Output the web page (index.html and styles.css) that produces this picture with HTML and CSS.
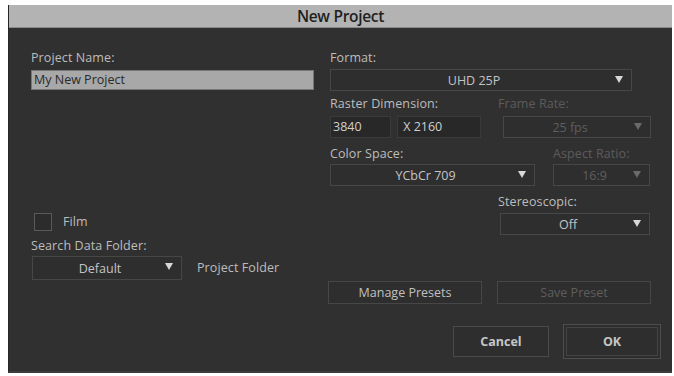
FILE: index.html
```html
<!DOCTYPE html>
<html>
<head>
<meta charset="utf-8">
<link rel="stylesheet" href="styles.css">
</head>
<body>
<div class="dialog">
  <div class="titlebar">New Project</div>
  <div class="content">
    <div class="col-left">
      <div class="label first">Project Name:</div>
      <div class="textfield">My New Project</div>
      <div class="film-row">
        <span class="checkbox"></span>
        <span class="label">Film</span>
      </div>
      <div class="label search-label">Search Data Folder:</div>
      <div class="folder-row">
        <div class="select select-default"><span class="val">Default</span><span class="arrow"></span></div>
        <span class="label">Project Folder</span>
      </div>
    </div>
    <div class="col-right">
      <div class="label first">Format:</div>
      <div class="select select-format"><span class="val">UHD 25P</span><span class="arrow"></span></div>
      <div class="row label-row">
        <span class="label w-raster">Raster Dimension:</span>
        <span class="label dim">Frame Rate:</span>
      </div>
      <div class="row field-row">
        <div class="numfield w-w">3840</div>
        <div class="numfield w-h">X 2160</div>
        <div class="select select-fps disabled"><span class="val">25 fps</span><span class="arrow"></span></div>
      </div>
      <div class="row label-row2">
        <span class="label w-color">Color Space:</span>
        <span class="label dim">Aspect Ratio:</span>
      </div>
      <div class="row field-row2">
        <div class="select select-color"><span class="val">YCbCr 709</span><span class="arrow"></span></div>
        <div class="select select-aspect disabled"><span class="val">16:9</span><span class="arrow"></span></div>
      </div>
      <div class="label stereo-label">Stereoscopic:</div>
      <div class="select select-stereo"><span class="val">Off</span><span class="arrow"></span></div>
      <div class="row preset-row">
        <div class="btn btn-preset">Manage Presets</div>
        <div class="btn btn-preset disabled">Save Preset</div>
      </div>
    </div>
    <div class="footer">
      <div class="btn btn-main">Cancel</div>
      <div class="btn btn-main btn-ok"><span>OK</span></div>
    </div>
  </div>
</div>
</body>
</html>
```
FILE: styles.css
```css
html, body {
  margin: 0;
  padding: 0;
  background: #ffffff;
}
body {
  font-family: "Open Sans", "Noto Sans", sans-serif;
  font-size: 12.5px;
}
.dialog {
  margin: 5px 2px 0 8px;
  width: 664px;
  height: 368px;
  display: flex;
  flex-direction: column;
  box-sizing: border-box;
  border-left: 1px solid #262626;
  border-bottom: 2px solid #3c3c3c;
}
.titlebar {
  height: 22px;
  background: #b3b3b3;
  color: #1f1f1f;
  font-size: 15.5px;
  font-weight: 600;
  text-align: center;
  line-height: 22px;
  border-bottom: 1px solid #8a8a8a;
  letter-spacing: -0.3px;
}
.content {
  flex: 1;
  background: #303030;
  display: grid;
  grid-template-columns: 283px 321px;
  grid-template-rows: auto 1fr;
  column-gap: 16px;
  padding-left: 22px;
}
.label {
  color: #bdbdbd;
  line-height: 14px;
  white-space: nowrap;
  letter-spacing: 0.1px;
}
.label.dim {
  color: #5c5c5c;
}
.first {
  margin-top: 23px;
}
.textfield {
  margin-top: 5px;
  height: 20px;
  background: #a8a8a8;
  color: #2a2a2a;
  line-height: 18px;
  padding-left: 2px;
  box-sizing: border-box;
  border: 1px solid #777;
}
.film-row {
  margin-top: 123px;
  display: flex;
  align-items: center;
  gap: 11px;
  padding-left: 3px;
}
.checkbox {
  width: 18px;
  height: 18px;
  box-sizing: border-box;
  border: 1px solid #5a5a5a;
  background: #2c2c2c;
}
.search-label {
  margin-top: 8px;
}
.folder-row {
  margin-top: 3px;
  display: flex;
  align-items: center;
  gap: 15px;
}
.select {
  position: relative;
  height: 22px;
  box-sizing: border-box;
  border: 1px solid #474747;
  background: #2e2e2e;
  display: flex;
  align-items: center;
  justify-content: center;
  color: #c4c4c4;
}
.select .val {
  margin-right: 14px;
}
.select .arrow {
  position: absolute;
  right: 8px;
  top: 6px;
  width: 0;
  height: 0;
  border-left: 4px solid transparent;
  border-right: 4px solid transparent;
  border-top: 7px solid #d8d8d8;
}
.select.disabled {
  color: #5e5e5e;
}
.select.disabled .arrow {
  border-top-color: #6a6a6a;
}
.select-default {
  width: 150px;
  height: 24px;
  margin-left: 1px;
}
.select-default .arrow { top: 6px; }
.col-right {
  display: flex;
  flex-direction: column;
}
.select-format {
  margin-top: 4px;
  width: 302px;
}
.row {
  display: flex;
}
.label-row {
  margin-top: 6px;
}
.w-raster {
  width: 168px;
}
.field-row {
  margin-top: 5px;
  align-items: stretch;
}
.numfield {
  height: 22px;
  box-sizing: border-box;
  background: #282828;
  border: 1px solid #3a3a3a;
  color: #cfcfcf;
  line-height: 20px;
  padding-left: 2px;
}
.w-w { width: 62px; }
.w-h { width: 85px; margin-left: 6px; padding-left: 5px; }
.select-fps {
  width: 150px;
  margin-left: 22px;
}
.label-row2 {
  margin-top: 9px;
}
.w-color {
  width: 223px;
}
.field-row2 {
  margin-top: 3px;
}
.select-color {
  width: 205px;
}
.select-aspect {
  width: 97px;
  margin-left: 18px;
}
.stereo-label {
  margin-left: 168px;
  margin-top: 9px;
}
.select-stereo {
  margin-left: 170px;
  margin-top: 4px;
  width: 150px;
}
.preset-row {
  margin-top: 46px;
  margin-left: -2px;
  gap: 15px;
}
.btn {
  box-sizing: border-box;
  border: 1px solid #474747;
  background: #2e2e2e;
  color: #c0c0c0;
  display: flex;
  align-items: center;
  justify-content: center;
}
.btn.disabled {
  color: #5e5e5e;
}
.btn-preset {
  width: 154px;
  height: 23px;
}
.footer {
  grid-column: 1 / 3;
  display: flex;
  justify-content: flex-end;
  align-items: center;
  gap: 14px;
  padding-top: 20px;
  margin-right: -10px;
  align-self: start;
}
.btn-main {
  width: 96px;
  height: 31px;
  font-weight: 700;
  color: #c6c6c6;
  border: 1px solid #4a4a4a;
}
.btn-ok {
  height: 35px;
  width: 98px;
  padding: 2px;
  border: 1px solid #4e4e4e;
}
.btn-ok span {
  flex: 1;
  align-self: stretch;
  display: flex;
  align-items: center;
  justify-content: center;
  border: 1px solid #444;
}
```
